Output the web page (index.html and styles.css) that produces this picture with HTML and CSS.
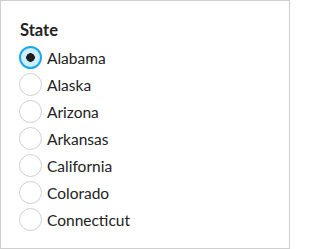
FILE: index.html
```html
<!DOCTYPE html>
<html>
<head>
<meta charset="utf-8">
<link rel="stylesheet" href="styles.css">
</head>
<body>
<div class="frame">
  <div class="title">State</div>
  <ul class="list">
    <li class="opt"><span class="radio checked"></span><span class="label">Alabama</span></li>
    <li class="opt"><span class="radio"></span><span class="label">Alaska</span></li>
    <li class="opt"><span class="radio"></span><span class="label">Arizona</span></li>
    <li class="opt"><span class="radio"></span><span class="label">Arkansas</span></li>
    <li class="opt"><span class="radio"></span><span class="label">California</span></li>
    <li class="opt"><span class="radio"></span><span class="label">Colorado</span></li>
    <li class="opt"><span class="radio"></span><span class="label">Connecticut</span></li>
  </ul>
</div>
</body>
</html>
```
FILE: styles.css
```css
html, body { margin: 0; padding: 0; background: #fff; }
.frame {
  box-sizing: border-box;
  width: 290px;
  height: 249px;
  border: 1px solid #cfcfcf;
  padding: 19px 18px 0 18px;
  font-family: Lato, "Noto Sans", sans-serif;
  color: #222;
}
.title {
  font-weight: 700;
  font-size: 16.5px;
  line-height: 20px;
  margin: 0 0 6px 1px;
}
.list { list-style: none; margin: 0; padding: 0; display: flex; flex-direction: column; gap: 4px; }
.opt { display: flex; align-items: center; gap: 5px; height: 23px; }
.radio {
  box-sizing: border-box;
  width: 23px; height: 23px;
  border-radius: 50%;
  border: 1px solid #cfcfcf;
  background: #fff;
  flex: none;
}
.radio.checked {
  border: 2px solid #1aa8e8;
  background: radial-gradient(circle, #1e1e1e 0 4px, #cdeefc 4.6px);
}
.label { font-size: 15.5px; line-height: 20px; }
```
